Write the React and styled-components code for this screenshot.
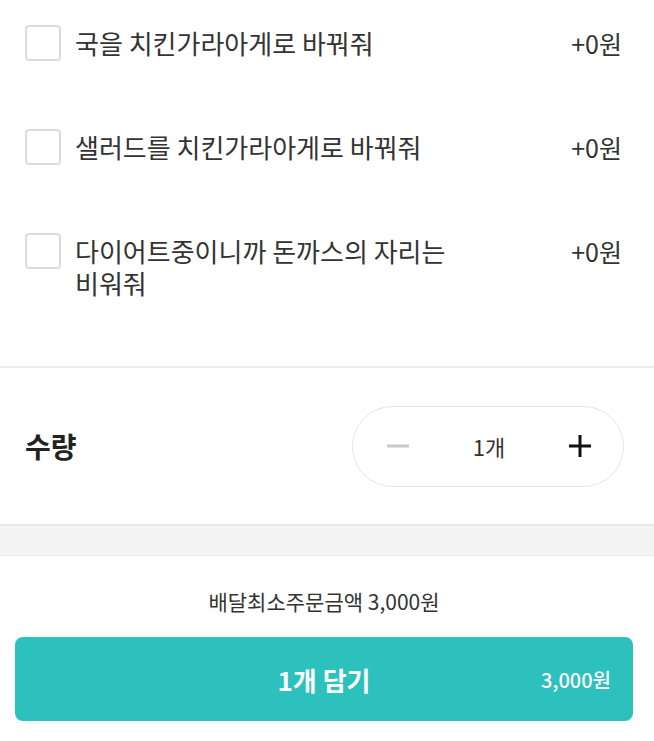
import styled, { createGlobalStyle } from 'styled-components'
import { useState } from 'react';

const GlobalStyle = createGlobalStyle`
    html, body {
        margin: 0;
        padding: 0;
        background: #fff;
    }
    body {
        font-family: 'Noto Sans CJK KR', 'Noto Sans', sans-serif;
        color: #333;
    }
`

const OPTIONS = [
    { id: 1, label: '국을 치킨가라아게로 바꿔줘', price: 0 },
    { id: 2, label: '샐러드를 치킨가라아게로 바꿔줘', price: 0 },
    { id: 3, label: '다이어트중이니까 돈까스의 자리는 비워줘', price: 0 },
]

const UNIT_PRICE = 3000

export const OptionList = styled.div`
    display: flex;
    flex-direction: column;
    gap: 68px;
    padding: 25px 32px 67px 25px;
    border-bottom: 2px solid #ebebeb;
`

OptionList.Row = styled.label`
    display: flex;
    align-items: flex-start;
    cursor: pointer;
`

OptionList.Box = styled.span`
    flex: none;
    box-sizing: border-box;
    width: 36px;
    height: 36px;
    border: 2px solid #dcdcdc;
    border-radius: 4px;
    background: ${({ checked }) => (checked ? '#2cc1bc' : '#fff')};
    border-color: ${({ checked }) => (checked ? '#2cc1bc' : '#dcdcdc')};
`

OptionList.Text = styled.span`
    flex: 1;
    max-width: 400px;
    margin-left: 14px;
    padding-top: 2px;
    font-size: 26px;
    line-height: 32px;
    color: #333;
    word-break: keep-all;
`

OptionList.Price = styled.span`
    margin-left: auto;
    padding-top: 2px;
    font-size: 25px;
    line-height: 32px;
    color: #333;
    white-space: nowrap;
`

export const Quantity = styled.div`
    display: flex;
    align-items: center;
    justify-content: space-between;
    height: 156px;
    padding: 0 30px 0 25px;
    border-bottom: 2px solid #e8e8e8;
`

Quantity.Title = styled.div`
    font-size: 28px;
    font-weight: 700;
    color: #222;
`

Quantity.Stepper = styled.div`
    display: flex;
    align-items: center;
    justify-content: space-between;
    box-sizing: border-box;
    width: 272px;
    height: 81px;
    padding: 0 30px 0 32px;
    border: 1px solid #e6e6e6;
    border-radius: 41px;
`

Quantity.Count = styled.span`
    font-size: 22px;
    color: #333;
`

Quantity.Button = styled.button`
    display: flex;
    align-items: center;
    justify-content: center;
    width: 26px;
    height: 26px;
    padding: 0;
    border: 0;
    background: none;
    cursor: pointer;
    color: ${({ disabled }) => (disabled ? '#c8c8c8' : '#111')};
`

const Spacer = styled.div`
    height: 29px;
    background: #f4f4f4;
    border-bottom: 1px solid #ececec;
`

export const Footer = styled.div`
    padding: 31px 21px 20px 15px;
`

Footer.Notice = styled.div`
    text-align: center;
    font-size: 21px;
    line-height: 28px;
    color: #333;
`

Footer.Submit = styled.button`
    display: grid;
    grid-template-columns: 1fr auto 1fr;
    align-items: center;
    width: 100%;
    height: 84px;
    margin-top: 22px;
    padding: 0 22px;
    border: 0;
    border-radius: 8px;
    background: #2cc1bc;
    color: #fff;
    font-family: inherit;
    cursor: pointer;
`

Footer.Label = styled.span`
    grid-column: 2;
    font-size: 26px;
    font-weight: 700;
`

Footer.Total = styled.span`
    grid-column: 3;
    justify-self: end;
    font-size: 20px;
    font-weight: 500;
`

const won = n => n.toLocaleString('en-US') + '원'

export default function App() {
    const [checked, setChecked] = useState({});
    const [count, setCount] = useState(1);

    return (
        <>
            <GlobalStyle />
            <OptionList>
                {OPTIONS.map(option => (
                    <OptionList.Row key={option.id} onClick={() => setChecked({ ...checked, [option.id]: !checked[option.id] })}>
                        <OptionList.Box checked={!!checked[option.id]} />
                        <OptionList.Text>{option.label}</OptionList.Text>
                        <OptionList.Price>+{won(option.price)}</OptionList.Price>
                    </OptionList.Row>
                ))}
            </OptionList>
            <Quantity>
                <Quantity.Title>수량</Quantity.Title>
                <Quantity.Stepper>
                    <Quantity.Button disabled={count <= 1} onClick={() => setCount(count - 1)}>
                        <svg width="24" height="24" viewBox="0 0 24 24">
                            <line x1="1" y1="12" x2="23" y2="12" stroke="currentColor" strokeWidth="3" />
                        </svg>
                    </Quantity.Button>
                    <Quantity.Count>{count}개</Quantity.Count>
                    <Quantity.Button onClick={() => setCount(count + 1)}>
                        <svg width="24" height="24" viewBox="0 0 24 24">
                            <line x1="1" y1="12" x2="23" y2="12" stroke="currentColor" strokeWidth="3" />
                            <line x1="12" y1="1" x2="12" y2="23" stroke="currentColor" strokeWidth="3" />
                        </svg>
                    </Quantity.Button>
                </Quantity.Stepper>
            </Quantity>
            <Spacer />
            <Footer>
                <Footer.Notice>배달최소주문금액 {won(UNIT_PRICE)}</Footer.Notice>
                <Footer.Submit>
                    <Footer.Label>{count}개 담기</Footer.Label>
                    <Footer.Total>{won(UNIT_PRICE * count)}</Footer.Total>
                </Footer.Submit>
            </Footer>
        </>
    )
}
